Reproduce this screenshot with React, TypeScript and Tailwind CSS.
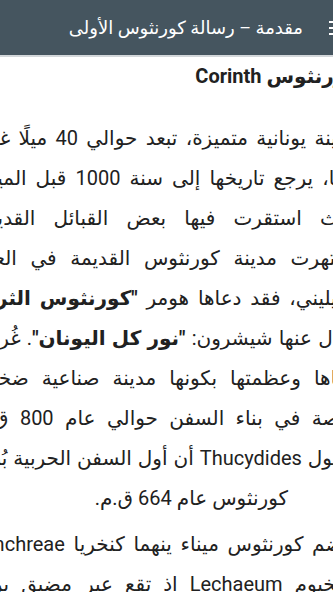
const font = { fontFamily: 'Roboto, "DejaVu Sans", sans-serif' };

const lines: React.ReactNode[] = [
  "مدينة يونانية متميزة، تبعد حوالي 40 ميلًا غرب",
  "أثينا، يرجع تاريخها إلى سنة 1000 قبل الميلاد،",
  "حيث استقرت فيها بعض القبائل القديمة.",
  "اشتهرت مدينة كورنثوس القديمة في العالم",
  <>
    الهيليني، فقد دعاها هومر <b>"كورنثوس الثرية"</b>
  </>,
  <>
    وقال عنها شيشرون: <b>"نور كل اليونان"</b>. غُرفت
  </>,
  "بغناها وعظمتها بكونها مدينة صناعية ضخمة،",
  "خاصة في بناء السفن حوالي عام 800 ق.م.",
  "ويقول Thucydides أن أول السفن الحربية بُنيت",
];

const lines2 = [
  "وتضم كورنثوس ميناء ينهما كنخريا Cenchreae",
  "وليخيوم Lechaeum إذ تقع عبر مضيق برزخ",
];

function Line({ children }: { children: React.ReactNode }) {
  return (
    <div className="h-[40px] leading-[40px] whitespace-nowrap text-justify [text-align-last:justify]">
      {children}
    </div>
  );
}

export default function App() {
  return (
    <div className="w-[333px] h-[592px] overflow-hidden bg-white" style={font}>
      <div dir="rtl" className="w-[414px] -ml-[42px]">
        <header className="h-[57px] bg-[#45555f] flex items-center gap-[26px] pr-[23px] border-b-2 border-[#d3d7da]">
          <svg width="20" height="14" viewBox="0 0 20 14" className="shrink-0">
            <rect x="0" y="0" width="20" height="2" fill="#fff" />
            <rect x="0" y="6" width="20" height="2" fill="#fff" />
            <rect x="0" y="12" width="20" height="2" fill="#fff" />
          </svg>
          <h1 className="text-[18px] text-white whitespace-nowrap">
            مقدمة – رسالة كورنثوس الأولى
          </h1>
        </header>
        <main className="pr-[14px] pl-[12px] text-[20px] text-[#212121]">
          <h2 className="mt-[4px] leading-[30px] font-bold">كورنثوس Corinth</h2>
          <div className="mt-[27px]">
            {lines.map((l, i) => (
              <Line key={i}>{l}</Line>
            ))}
            <div className="h-[40px] leading-[40px] whitespace-nowrap pr-[70px]">
              كورنثوس عام 664 ق.م.
            </div>
          </div>
          <div className="mt-[6px]">
            {lines2.map((l, i) => (
              <Line key={i}>{l}</Line>
            ))}
          </div>
        </main>
      </div>
    </div>
  );
}
